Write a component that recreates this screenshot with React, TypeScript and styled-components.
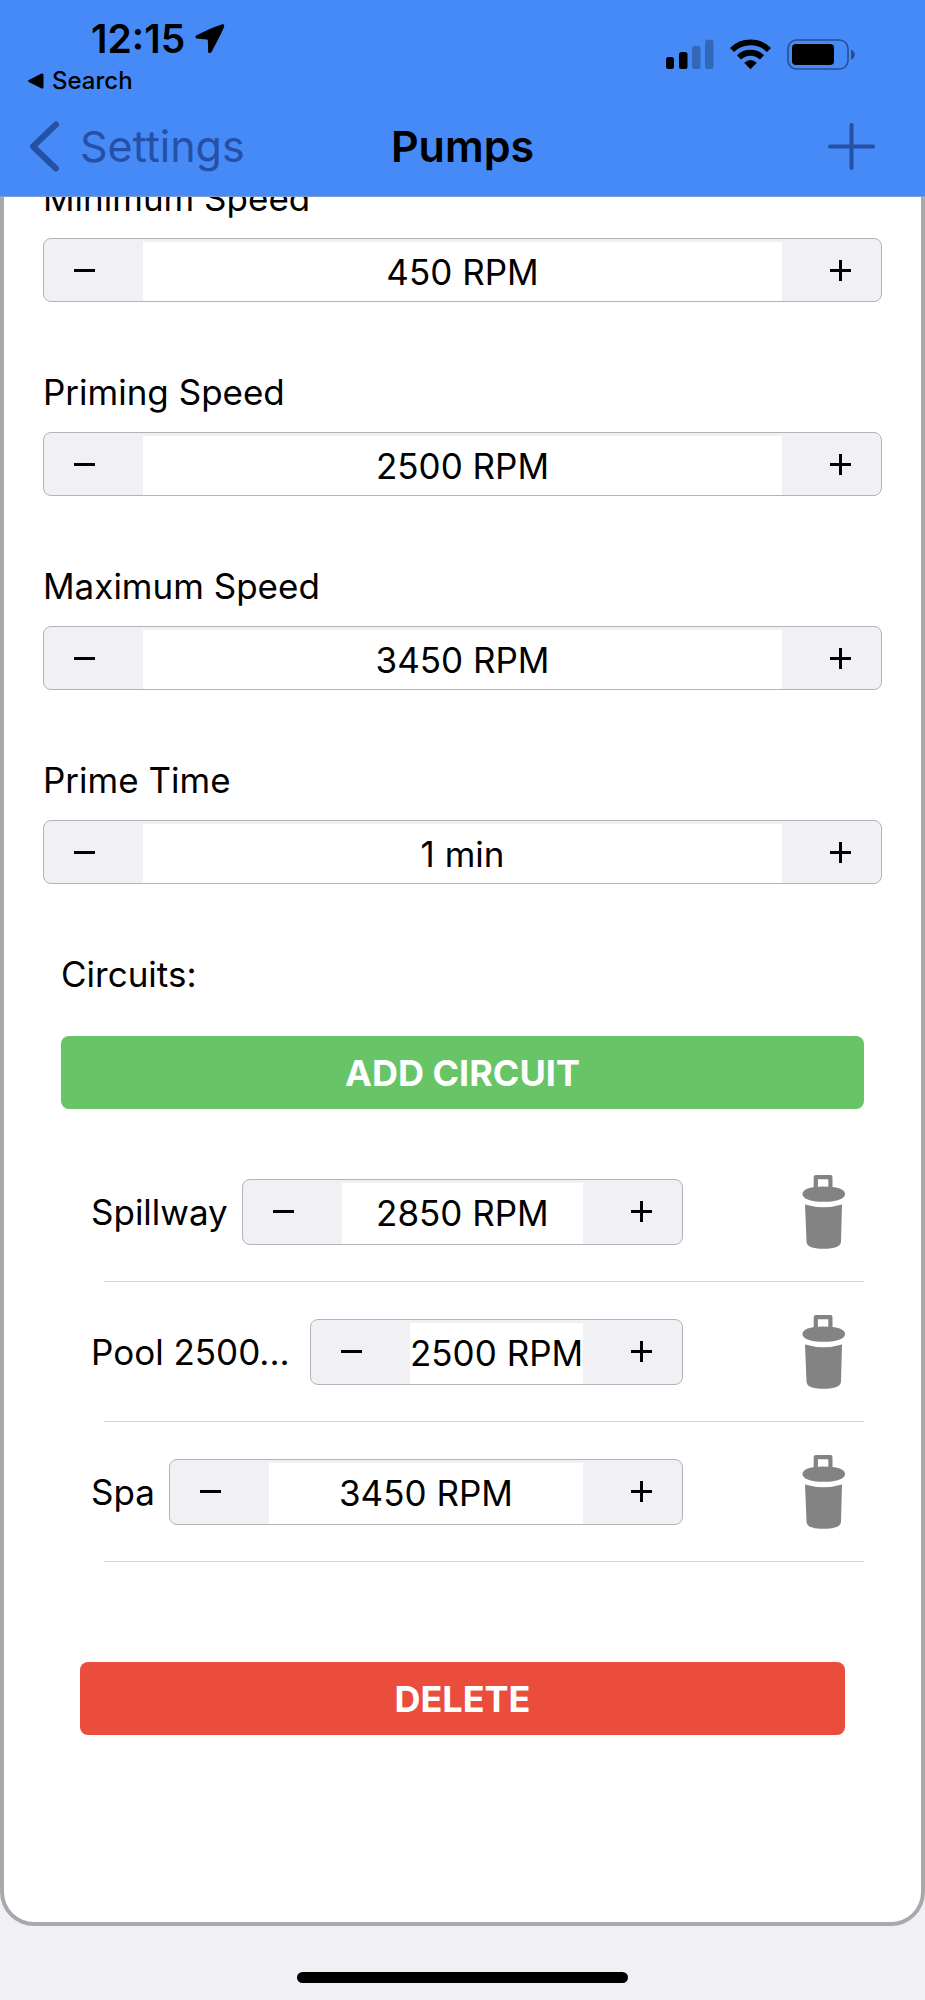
import React, { useId, useState } from "react";
import styled, { createGlobalStyle } from "styled-components";

const GlobalStyle = createGlobalStyle`
  *, *::before, *::after { box-sizing: border-box; }
  body {
    margin: 0;
    background: #f1f0f5;
    color: #000;
    font-family: Inter, "Liberation Sans", sans-serif;
    font-size: 35px;
    line-height: 44px;
  }
  button, input { font: inherit; color: inherit; border: 0; padding: 0; margin: 0; background: none; }
  button { cursor: pointer; }
  svg { display: block; flex: none; }
`;

const Screen = styled.div`
  display: flex;
  flex-direction: column;
  min-height: 100vh;
`;

const Header = styled.header`
  position: sticky;
  top: 0;
  z-index: 1;
  background: #458af6;
  border-bottom: 1px solid #7f9fd0;
`;

const StatusBar = styled.div`
  display: flex;
  justify-content: space-between;
  padding: 16px 70px 0 28px;
`;

const StatusLeft = styled.div`
  display: flex;
  flex-direction: column;
  gap: 4px;
`;

const Clock = styled.div`
  display: flex;
  align-items: center;
  gap: 10px;
  padding-left: 63px;
  font-size: 39px;
  line-height: 46px;
  font-weight: 600;
`;

const BackToApp = styled.button`
  display: flex;
  align-items: center;
  gap: 8px;
  font-size: 24px;
  line-height: 30px;
  font-weight: 500;
`;

const StatusIcons = styled.div`
  display: flex;
  align-items: flex-start;
  gap: 16px;
  padding-top: 23px;
`;

const NavBar = styled.nav`
  display: grid;
  grid-template-columns: 1fr auto 1fr;
  align-items: center;
  height: 100px;
  padding: 0 29px;
  color: #264fa6;
  font-size: 43px;
`;

const BackButton = styled.button`
  display: flex;
  align-items: center;
  justify-self: start;
  gap: 20px;
`;

const Title = styled.h1`
  margin: 0;
  color: #000;
  font-size: inherit;
  font-weight: 600;
`;

const AddPumpButton = styled.button`
  justify-self: end;
  margin-right: 21px;
`;

const Card = styled.main`
  flex: 1;
  display: flex;
  flex-direction: column;
  margin-top: -21px;
  margin-bottom: 74px;
  padding: 0 39px;
  background: #fff;
  border: 4px solid #a9a9a9;
  border-top: 0;
  border-radius: 0 0 34px 34px;
`;

const Field = styled.div`
  display: flex;
  flex-direction: column;
  gap: 18px;
  margin-bottom: 68px;
`;

const StepperBox = styled.div<{ $tall?: boolean }>`
  flex: 1 1 auto;
  display: flex;
  min-width: 0;
  height: ${(p) => (p.$tall ? 66 : 64)}px;
  overflow: hidden;
  background: #f1f0f5;
  border: 1px solid #b4b4b6;
  border-radius: 8px;
`;

const StepButton = styled.button<{ $side: "left" | "right" }>`
  flex: none;
  display: flex;
  align-items: center;
  justify-content: ${(p) => (p.$side === "left" ? "flex-start" : "flex-end")};
  width: 99px;
  padding: 0 30px;
`;

const StepValue = styled.input`
  flex: 1 1 0;
  min-width: 0;
  margin-top: 3px;
  background: #fff;
  text-align: center;
  outline: none;
`;

const Circuits = styled.section`
  display: flex;
  flex-direction: column;
  padding: 0 18px;
`;

const SectionTitle = styled.h2`
  margin: 0 0 40px;
  font-size: inherit;
  font-weight: 400;
`;

const ActionButton = styled.button<{ $tone: "add" | "delete" }>`
  height: 73px;
  border-radius: 8px;
  background: ${(p) => (p.$tone === "add" ? "#67c568" : "#eb4d3d")};
  color: #fff;
  font-size: 36px;
  font-weight: 700;
`;

const CircuitList = styled.ul`
  list-style: none;
  margin: 33px 0 0;
  padding: 0;
`;

const CircuitRow = styled.div`
  display: flex;
  align-items: center;
  height: 139px;
  padding: 0 18px 0 30px;
`;

const CircuitName = styled.label<{ $truncated?: boolean }>`
  flex: none;
  width: ${(p) => (p.$truncated ? "205px" : "auto")};
  margin-right: 14px;
  white-space: nowrap;
`;

const TrashButton = styled.button`
  flex: none;
  margin-left: 119px;
`;

const Divider = styled.div`
  height: 1px;
  margin-left: 43px;
  background: #d2d2d4;
`;

const DeleteArea = styled.div`
  display: flex;
  flex-direction: column;
  padding: 100px 37px 187px;
`;

const HomeArea = styled.footer`
  position: fixed;
  left: 0;
  right: 0;
  bottom: 17px;
  display: flex;
  justify-content: center;
`;

const HomeIndicator = styled.div`
  width: 331px;
  height: 11px;
  border-radius: 6px;
  background: #000;
`;

const LocationIcon = () => (
  <svg width="30" height="30" viewBox="0 0 31 31" aria-hidden="true">
    <path d="M27.500 0.500Q31 -.3 30 3.200 28.500 7.500 17.300 28.600 15.800 31 13.600 29.500L13.300 17Q13.200 16.200 12.300 16.100L1.400 15.100Q-.4 13.500 1.200 11.900 16 4.300 27.500 .5Z" />
  </svg>
);

const SignalIcon = () => (
  <svg width="48" height="31" viewBox="0 0 48 31" aria-hidden="true">
    <rect x="0" y="18" width="8" height="12" rx="2.500" />
    <rect x="13" y="13" width="8.500" height="17" rx="2.500" />
    <rect x="26" y="7" width="8.500" height="23" rx="2.500" fillOpacity=".25" />
    <rect x="39" y="0.700" width="8.500" height="29.300" rx="2.500" fillOpacity=".25" />
  </svg>
);

const WifiIcon = () => (
  <svg width="41" height="31" viewBox="0 0 41 31" aria-hidden="true">
    <g fill="none" stroke="#000" strokeWidth="5.800">
      <path d="M2 11A26.500 26.500 0 0 1 39 11" />
      <path d="M9 18.400A16.500 16.500 0 0 1 32 18.400" />
    </g>
    <path d="M20.500 30.200L14.200 23.800Q20.500 18.300 26.800 23.800Z" />
  </svg>
);

const BatteryIcon = () => (
  <svg width="68" height="31" viewBox="0 0 68 31" aria-hidden="true">
    <rect x="1" y="1" width="60" height="29" rx="8.500" fill="none" stroke="#294f8f" strokeWidth="1.600" />
    <rect x="5" y="5" width="42" height="21" rx="4" />
    <path d="M64 10.500Q67.800 12 67.800 15.500T64 20.500Z" fill="#294f8f" />
  </svg>
);

const TrashIcon = () => (
  <svg width="44" height="74" viewBox="0 0 44 74" fill="#838383" aria-hidden="true">
    <path d="M13.800 14V2.200H28.400V14" fill="none" stroke="#838383" strokeWidth="4.200" strokeLinejoin="round" />
    <path d="M.5 19C.5 14.500 7 11.500 21.700 11.500S43 14.500 43 19 36 26.800 21.700 26.800 .5 23.500 .5 19Z" />
    <path d="M3 29.500Q21.500 35 40 29.500L39 66.500C38.800 71.500 33 73.800 21.500 73.800S4.700 71.500 4.500 66.500Z" />
  </svg>
);

const StepGlyph = ({ plus = false }: { plus?: boolean }) => (
  <svg width="21" height="21" viewBox="0 0 21 21" aria-hidden="true">
    <path d={plus ? "M0 10.500H21M10.500 0V21" : "M0 10.500H21"} stroke="#000" strokeWidth="3" />
  </svg>
);

type StepperProps = { id: string; initial: number; step: number; unit: string; tall?: boolean };

function Stepper({ id, initial, step, unit, tall }: StepperProps) {
  const [value, setValue] = useState(initial);
  return (
    <StepperBox $tall={tall}>
      <StepButton type="button" $side="left" aria-label="Decrease" onClick={() => setValue(Math.max(0, value - step))}>
        <StepGlyph />
      </StepButton>
      <StepValue id={id} type="text" size={1} readOnly value={`${value} ${unit}`} />
      <StepButton type="button" $side="right" aria-label="Increase" onClick={() => setValue(value + step)}>
        <StepGlyph plus />
      </StepButton>
    </StepperBox>
  );
}

const settings = [
  { label: "Minimum Speed", value: 450, step: 50, unit: "RPM" },
  { label: "Priming Speed", value: 2500, step: 50, unit: "RPM" },
  { label: "Maximum Speed", value: 3450, step: 50, unit: "RPM" },
  { label: "Prime Time", value: 1, step: 1, unit: "min" },
];

const circuits = [
  { name: "Spillway", speed: 2850 },
  { name: "Pool 2500...", speed: 2500, truncated: true },
  { name: "Spa", speed: 3450 },
];

export default function App() {
  const uid = useId();
  return (
    <Screen>
      <GlobalStyle />
      <Header>
        <StatusBar>
          <StatusLeft>
            <Clock>
              12:15
              <LocationIcon />
            </Clock>
            <BackToApp type="button">
              <svg width="16" height="16" viewBox="0 0 16 16" aria-hidden="true">
                <path d="M.8 7L13.600.6Q15.500 0 15.500 2V14Q15.500 16 13.600 15.400L.8 9Q-.6 8 .8 7Z" />
              </svg>
              Search
            </BackToApp>
          </StatusLeft>
          <StatusIcons>
            <SignalIcon />
            <WifiIcon />
            <BatteryIcon />
          </StatusIcons>
        </StatusBar>
        <NavBar>
          <BackButton type="button">
            <svg width="31" height="51" viewBox="0 0 31 51" aria-hidden="true">
              <path d="M27 3.500L4 25.500L27 47.500" fill="none" stroke="#264fa6" strokeWidth="6" strokeLinecap="round" strokeLinejoin="round" />
            </svg>
            Settings
          </BackButton>
          <Title>Pumps</Title>
          <AddPumpButton type="button" aria-label="Add pump">
            <svg width="47" height="47" viewBox="0 0 47 47" aria-hidden="true">
              <path d="M2 23.500H45M23.500 2V45" stroke="#264fa6" strokeWidth="4" strokeLinecap="round" />
            </svg>
          </AddPumpButton>
        </NavBar>
      </Header>
      <Card>
        {settings.map((s, i) => (
          <Field key={s.label}>
            <label htmlFor={`${uid}s${i}`}>{s.label}</label>
            <Stepper id={`${uid}s${i}`} initial={s.value} step={s.step} unit={s.unit} />
          </Field>
        ))}
        <Circuits>
          <SectionTitle>Circuits:</SectionTitle>
          <ActionButton type="button" $tone="add">ADD CIRCUIT</ActionButton>
          <CircuitList>
            {circuits.map((c, i) => (
              <li key={c.name}>
                <CircuitRow>
                  <CircuitName htmlFor={`${uid}c${i}`} $truncated={c.truncated}>{c.name}</CircuitName>
                  <Stepper id={`${uid}c${i}`} initial={c.speed} step={50} unit="RPM" tall />
                  <TrashButton type="button" aria-label={`Remove ${c.name}`}>
                    <TrashIcon />
                  </TrashButton>
                </CircuitRow>
                <Divider />
              </li>
            ))}
          </CircuitList>
        </Circuits>
        <DeleteArea>
          <ActionButton type="button" $tone="delete">DELETE</ActionButton>
        </DeleteArea>
      </Card>
      <HomeArea>
        <HomeIndicator />
      </HomeArea>
    </Screen>
  );
}
